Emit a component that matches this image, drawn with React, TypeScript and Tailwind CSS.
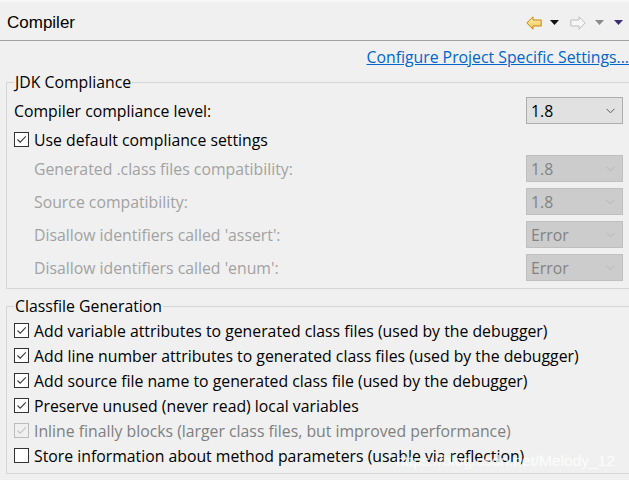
import React from "react";

const font = { fontFamily: '"Open Sans", "Noto Sans", sans-serif' };

function Check({ checked, disabled }: { checked: boolean; disabled?: boolean }) {
  return (
    <div
      className={
        "w-[15px] h-[15px] shrink-0 border flex items-center justify-center " +
        (disabled ? "border-[#bcbcbc] bg-[#f0f0f0]" : "border-[#333333] bg-white")
      }
    >
      {checked && (
        <svg width="13" height="13" viewBox="0 0 13 13">
          <path
            d="M2.5 6.5 L5.2 9.2 L10.8 3.4"
            fill="none"
            stroke={disabled ? "#c4c4c4" : "#3a3a3a"}
            strokeWidth="1.1"
          />
        </svg>
      )}
    </div>
  );
}

function Select({ value, disabled }: { value: string; disabled?: boolean }) {
  return (
    <div
      className={
        "w-[97px] h-[27px] border flex items-center justify-between pl-[4px] pr-[7px] text-[15.8px] " +
        (disabled
          ? "bg-[#cccccc] border-[#bfbfbf] text-[#838383]"
          : "bg-[#e1e1e1] border-[#adadad] text-black")
      }
    >
      <span>{value}</span>
      <svg width="9" height="6" viewBox="0 0 9 6">
        <path
          d="M0.5 0.8 L4.5 4.8 L8.5 0.8"
          fill="none"
          stroke={disabled ? "#b4b4b4" : "#5a5a5a"}
          strokeWidth="1"
        />
      </svg>
    </div>
  );
}

function DisabledRow({ label, value }: { label: string; value: string }) {
  return (
    <div className="h-[27px] flex items-center justify-between pl-[27px] pr-[5px]">
      <span className="text-[#a2a2a2]">{label}</span>
      <Select value={value} disabled />
    </div>
  );
}

function CheckRow({
  label,
  checked,
  disabled,
}: {
  label: string;
  checked: boolean;
  disabled?: boolean;
}) {
  return (
    <div className="h-[25px] flex items-center gap-[5px] pl-[7px]">
      <Check checked={checked} disabled={disabled} />
      <span className={"whitespace-nowrap " + (disabled ? "text-[#7f7f7f]" : "text-black")}>{label}</span>
    </div>
  );
}

export default function App() {
  return (
    <div
      className="relative w-[629px] h-[480px] bg-[#f0f0f0] overflow-hidden text-[15.8px] leading-[20px] text-black"
      style={font}
    >
      <div className="h-[41px] border-t-2 border-[#f8f8f8] border-b border-b-[#a0a0a0] flex items-center justify-between pl-[7px] pr-[6px] pt-[3px]">
        <span
          className="text-[17px] text-black"
          style={{ fontFamily: '"Liberation Sans", Arial, sans-serif' }}
        >
          Compiler
        </span>
        <div className="flex items-center">
          <svg width="16" height="14" viewBox="0 0 16 14" className="mr-[8px]">
            <defs>
              <linearGradient id="ya" x1="0" y1="0" x2="0" y2="1">
                <stop offset="0" stopColor="#fff3b8" />
                <stop offset="1" stopColor="#f2c14e" />
              </linearGradient>
            </defs>
            <path
              d="M0.8 7 L7 0.8 L7 4 L15.2 4 L15.2 10 L7 10 L7 13.2 Z"
              fill="url(#ya)"
              stroke="#c8860f"
              strokeWidth="1"
              strokeLinejoin="round"
            />
          </svg>
          <svg width="9" height="5" viewBox="0 0 9 5" className="mr-[11px]">
            <path d="M0 0 L9 0 L4.5 5 Z" fill="#111" />
          </svg>
          <svg width="16" height="14" viewBox="0 0 16 14" className="mr-[9px]">
            <path
              d="M15.2 7 L9 0.8 L9 4 L0.8 4 L0.8 10 L9 10 L9 13.2 Z"
              fill="#f6f6f6"
              stroke="#bdbdbd"
              strokeWidth="1"
              strokeLinejoin="round"
            />
          </svg>
          <svg width="9" height="5" viewBox="0 0 9 5" className="mr-[10px]">
            <path d="M0 0 L9 0 L4.5 5 Z" fill="#8a8a8a" />
          </svg>
          <svg width="9" height="5" viewBox="0 0 9 5">
            <path d="M0 0 L9 0 L4.5 5 Z" fill="#3f2f6e" />
          </svg>
        </div>
      </div>

      <div className="h-[31px] flex items-center justify-end overflow-hidden">
        <span className="text-[#0066cc] underline whitespace-nowrap">
          Configure Project Specific Settings...
        </span>
      </div>

      <fieldset className="ml-[6px] mr-[-10px] border border-[#d5d5d5] pb-[7px]">
        <legend className="ml-[7px] px-[1px] leading-[20px]">JDK Compliance</legend>
        <div className="flex flex-col">
          <div className="h-[27px] mt-[5px] flex items-center justify-between pl-[7px] pr-[15px]">
            <span>Compiler compliance level:</span>
            <Select value="1.8" />
          </div>
          <div className="h-[31px] flex items-center gap-[5px] pl-[7px]">
            <Check checked />
            <span>Use default compliance settings</span>
          </div>
          <div className="flex flex-col gap-[6px] pr-[10px]">
            <DisabledRow label="Generated .class files compatibility:" value="1.8" />
            <DisabledRow label="Source compatibility:" value="1.8" />
            <DisabledRow label="Disallow identifiers called 'assert':" value="Error" />
            <DisabledRow label="Disallow identifiers called 'enum':" value="Error" />
          </div>
        </div>
      </fieldset>

      <fieldset className="ml-[6px] mr-[-10px] mt-[7px] border border-[#d5d5d5] pt-[2px] pb-[5px]">
        <legend className="ml-[7px] px-[1px] leading-[20px]">Classfile Generation</legend>
        <CheckRow label="Add variable attributes to generated class files (used by the debugger)" checked />
        <CheckRow label="Add line number attributes to generated class files (used by the debugger)" checked />
        <CheckRow label="Add source file name to generated class file (used by the debugger)" checked />
        <CheckRow label="Preserve unused (never read) local variables" checked />
        <CheckRow label="Inline finally blocks (larger class files, but improved performance)" checked disabled />
        <CheckRow label="Store information about method parameters (usable via reflection)" checked={false} />
      </fieldset>

      <div
        className="absolute left-[396px] top-[451px] text-[15.5px] leading-[20px] text-white/80 whitespace-nowrap pointer-events-none"
        style={{ fontFamily: '"Liberation Sans", Arial, sans-serif' }}
      >
        https://blog.csdn.net/Melody_12
      </div>
    </div>
  );
}
